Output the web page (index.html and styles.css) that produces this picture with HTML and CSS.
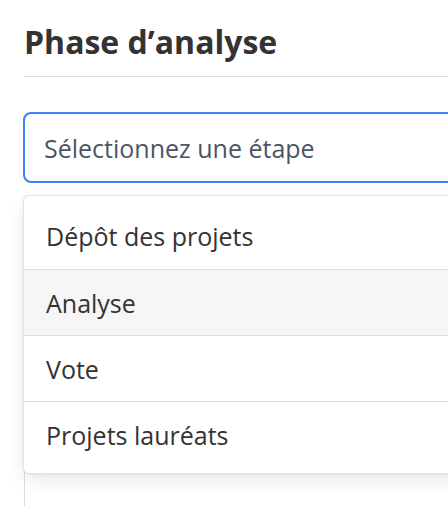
FILE: index.html
```html
<!DOCTYPE html>
<html lang="fr">
<head>
<meta charset="utf-8">
<link rel="stylesheet" href="styles.css">
</head>
<body>
<div class="page">
  <h1 class="title">Phase d’analyse</h1>
  <hr class="divider">
  <div class="field">
    <div class="select">Sélectionnez une étape</div>
    <div class="below"></div>
    <ul class="menu">
      <li class="item">Dépôt des projets</li>
      <li class="item active">Analyse</li>
      <li class="item">Vote</li>
      <li class="item">Projets lauréats</li>
    </ul>
  </div>
</div>
</body>
</html>
```
FILE: styles.css
```css
html, body {
  margin: 0;
  padding: 0;
  background: #fff;
  overflow: hidden;
  height: 506px;
}
.page {
  padding: 22px 0 0 24px;
  width: 560px;
  font-family: "Open Sans", "DejaVu Sans", sans-serif;
}
.title {
  margin: 0;
  font-size: 32px;
  line-height: 40px;
  font-weight: 700;
  color: #333;
  padding-left: 0;
}
.divider {
  margin: 14px 0 0 0;
  border: 0;
  border-top: 1px solid #dddddd;
}
.field {
  position: relative;
  margin-top: 35px;
  margin-left: -1px;
}
.select {
  height: 67px;
  border: 2px solid #3b82f6;
  border-radius: 8px;
  display: flex;
  align-items: center;
  padding-left: 19px;
  font-size: 25px;
  color: #4b5563;
}
.below {
  margin-top: 14px;
  margin-left: 1px;
  height: 400px;
  border-left: 1px solid #dddddd;
}
.menu {
  position: absolute;
  top: 83px;
  left: 0;
  right: 0;
  margin: 0;
  padding: 6px 0;
  list-style: none;
  background: #fff;
  border: 1px solid #e2e2e2;
  border-radius: 6px;
  box-shadow: 0 8px 18px rgba(0, 0, 0, 0.08), 0 1px 3px rgba(0,0,0,0.06);
}
.item {
  height: 65px;
  display: flex;
  align-items: center;
  padding-left: 22px;
  font-size: 25px;
  color: #333;
  border-top: 1px solid #dddddd;
}
.item:first-child {
  border-top: 0;
  height: 67px;
}
.item.active {
  background: #f6f6f6;
}
```
